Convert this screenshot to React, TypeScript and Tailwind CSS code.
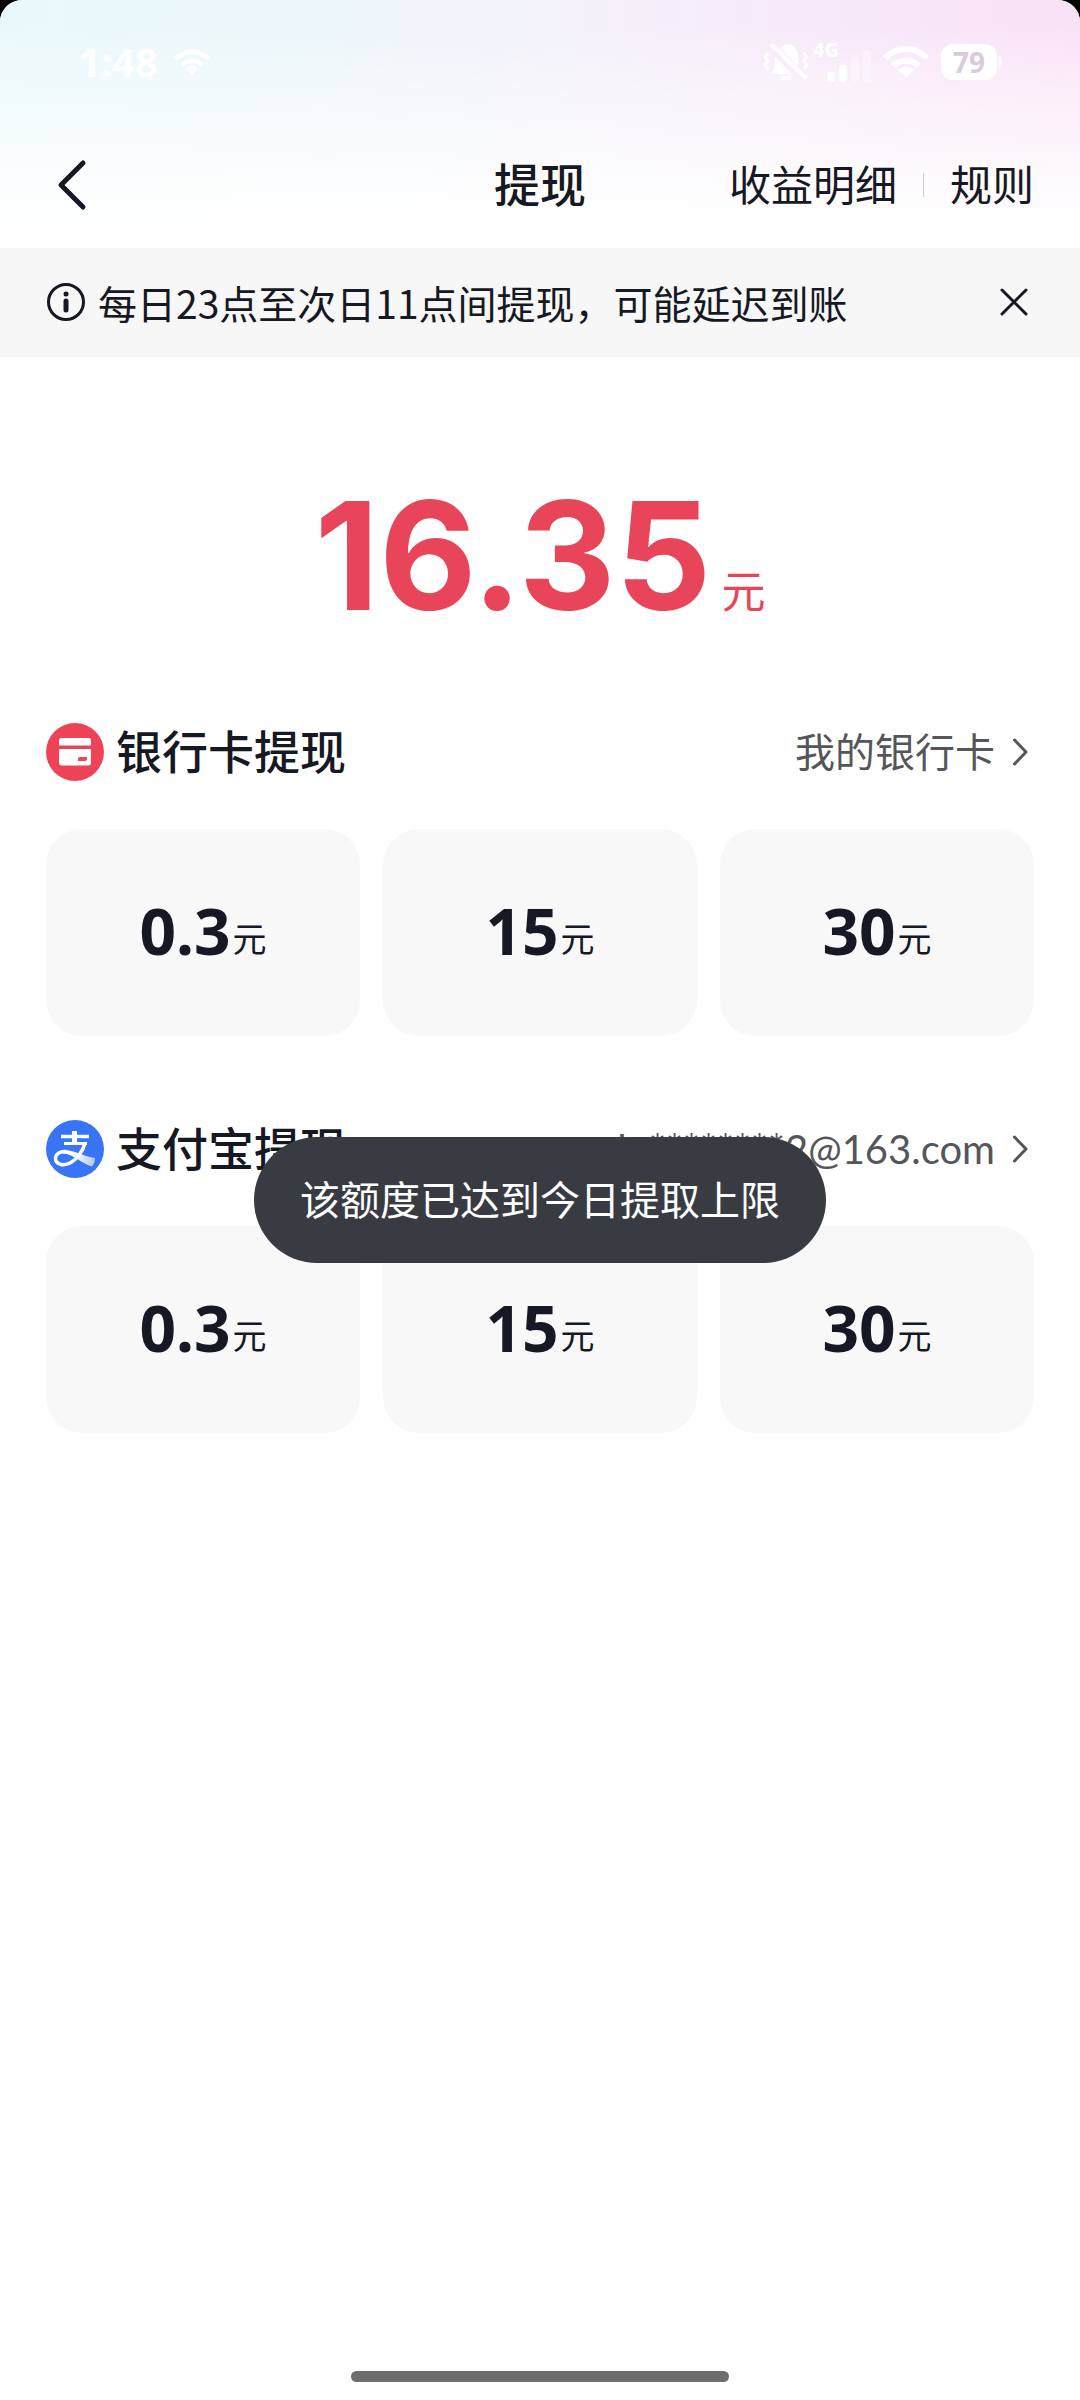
const amounts = ["0.3", "15", "30"]

function WifiIcon({ className }: { className: string }) {
  return (
    <svg viewBox="0 0 46 32" className={className} fill="none" stroke="currentColor" strokeWidth="6">
      <path d="M2 12 C14 0 32 0 44 12" />
      <path d="M10 20 C17 13 29 13 36 20" />
      <path d="M15 24 Q23 17 31 24 L23 32 Z" fill="currentColor" stroke="none" />
    </svg>
  )
}

function BellOffIcon() {
  return (
    <svg viewBox="0 0 46 40" className="h-10 w-[46px]" fill="none" stroke="currentColor" strokeWidth="3">
      <path d="M12 15 L29 32 H8 C11 28 12 24 12 15 Z" fill="currentColor" stroke="none" />
      <path d="M17 6 C25 -1 35 4 35 14 V24 Z" fill="currentColor" stroke="none" />
      <path d="M8 2 L43 36" strokeWidth="4" />
      <path d="M18 36 H28" strokeWidth="4" />
      <path d="M5 11 L2 15 L5 19 L2 23 L5 27" />
      <path d="M41 11 L44 15 L41 19 L44 23 L41 27" />
    </svg>
  )
}

function SignalIcon() {
  return (
    <svg viewBox="0 0 44 32" className="h-8 w-11" fill="currentColor">
      <rect x="0" y="22" width="8" height="10" rx="2" />
      <rect x="12" y="15" width="8" height="17" rx="2" />
      <rect x="24" y="7" width="8" height="25" rx="2" opacity="0.3" />
      <rect x="36" y="0" width="8" height="32" rx="2" opacity="0.3" />
    </svg>
  )
}

function BankCardIcon() {
  return (
    <svg viewBox="0 0 58 58" className="size-[58px]">
      <circle cx="29" cy="29" r="29" fill="#ee4257" />
      <path d="M13 22.5 V17.5 Q13 15 15.5 15 H42.5 Q45 15 45 17.5 V22.5 Z" fill="#fff" />
      <path d="M13 26 H45 V39.5 Q45 42.5 42 42.5 H16 Q13 42.5 13 39.5 Z" fill="#fff" />
      <path d="M34 34 H41 V36 Q41 38 39 38 H32 V36 Q32 34 34 34 Z" fill="#ee4257" />
    </svg>
  )
}

function AlipayIcon() {
  return (
    <svg viewBox="0 0 58 58" className="size-[58px]" fill="none" stroke="#fff">
      <defs>
        <linearGradient id="swoosh" x1="0" x2="1" y1="0" y2="0">
          <stop offset="0.4" stopColor="#fff" />
          <stop offset="1" stopColor="#fff" stopOpacity="0.6" />
        </linearGradient>
      </defs>
      <circle cx="29" cy="29" r="29" fill="#3875f6" stroke="none" />
      <path d="M15 16.5 H43" strokeWidth="3.5" />
      <path d="M28.5 11 V24" strokeWidth="5" />
      <path d="M18 23.5 H41" strokeWidth="3" />
      <path d="M39 23 C37 31 31 39 25 42.5 C17 47 9.5 44 9.5 38.5 C9.5 34 14 31 20 31.5" strokeWidth="3.5" />
      <path
        d="M15 30.5 C24 28 33 35 49 38 C49 41 48 44 46 46.5 C38 44 32 39 25 35.5 C21 34 17 33 13 34 Z"
        fill="url(#swoosh)"
        stroke="none"
      />
    </svg>
  )
}

function Withdrawal({ icon, title, account }: { icon: React.ReactNode; title: string; account: string }) {
  return (
    <section>
      <div className="flex items-center justify-between">
        <h2 className="flex items-center gap-3 text-[46px] leading-[58px] font-medium">
          {icon}
          {title}
        </h2>
        <a href="#account" className="flex items-center gap-[18px] pr-[6px] text-[40px] leading-[58px] text-[#55565a]">
          {account}
          <svg viewBox="0 0 15 28" className="h-7 w-[15px]" fill="none" stroke="currentColor" strokeWidth="3">
            <path d="M1.5 2 L13 14 L1.5 26" strokeLinecap="round" strokeLinejoin="round" />
          </svg>
        </a>
      </div>
      <div className="mt-12 grid grid-cols-3 gap-[23px]">
        {amounts.map((amount) => (
          <button
            key={amount}
            type="button"
            className="flex h-[207px] items-center justify-center rounded-[36px] bg-[#f8f8f8] pb-1"
          >
            <span className="flex items-end gap-[2px]">
              <span className="font-['Noto_Sans'] text-[64px] leading-none font-bold">{amount}</span>
              <span className="pb-[7px] text-[34px] leading-none">元</span>
            </span>
          </button>
        ))}
      </div>
    </section>
  )
}

export default function App() {
  return (
    <div className="bg-black font-['Lato','Noto_Sans_CJK_SC',sans-serif] text-[#161823]">
      <div className="flex min-h-screen flex-col overflow-hidden rounded-t-[22px] bg-white">
        <header className="bg-[linear-gradient(to_bottom,transparent_10%,#ffffff80_45%,white_90%),linear-gradient(to_right,#e9f9fb,#ecf6fa_30%,#f4f0fa_55%,#fae2f6)]">
          <div className="flex h-[124px] items-center justify-between px-[78px] text-white">
            <div className="flex items-center gap-4">
              <span className="font-['Noto_Sans'] text-[40px] leading-none font-bold">1:48</span>
              <WifiIcon className="h-7 w-9" />
            </div>
            <div className="flex items-center gap-3">
              <div className="flex items-center gap-1">
                <BellOffIcon />
                <div className="flex h-10 items-end">
                  <span className="-mr-3 self-start font-['Noto_Sans'] text-xl leading-4 font-bold">4G</span>
                  <SignalIcon />
                </div>
              </div>
              <WifiIcon className="h-8 w-[46px]" />
              <div className="flex items-center gap-px">
                <span className="rounded-xl bg-white px-3 font-['Noto_Sans'] text-[28px] leading-9 font-bold text-[#d9cbd9]">
                  79
                </span>
                <span className="h-3 w-1 rounded-r bg-white/60" />
              </div>
            </div>
          </div>
          <nav className="grid h-[124px] grid-cols-[1fr_auto_1fr] items-center px-[46px] pb-[2px]">
            <button type="button" aria-label="返回" className="justify-self-start pl-[10px]">
              <svg viewBox="0 0 32 52" className="h-[52px] w-8" fill="none" stroke="currentColor" strokeWidth="5">
                <path d="M27 4 L5 26 L27 48" strokeLinecap="round" strokeLinejoin="round" />
              </svg>
            </button>
            <h1 className="text-[46px] leading-[58px] font-medium">提现</h1>
            <div className="flex items-center gap-[26px] justify-self-end text-[42px] leading-[58px]">
              <a href="#records">收益明细</a>
              <span className="h-6 w-px bg-[#d0d0d3]" />
              <a href="#rules">规则</a>
            </div>
          </nav>
        </header>

        <div className="flex h-[109px] items-center bg-[#f7f7f7] px-[46px] pb-[2px]">
          <svg viewBox="0 0 40 40" className="size-10" fill="none" stroke="currentColor" strokeWidth="3">
            <circle cx="20" cy="20" r="17.5" />
            <circle cx="20" cy="12" r="2.5" fill="currentColor" stroke="none" />
            <path d="M20 19 V28" strokeWidth="5" strokeLinecap="round" />
          </svg>
          <p className="ml-3 flex-1 font-['Noto_Sans_CJK_SC'] text-[39px] leading-[58px]">
            每日23点至次日11点间提现，可能延迟到账
          </p>
          <button type="button" aria-label="关闭" className="pr-[6px]">
            <svg viewBox="0 0 28 28" className="size-7" fill="none" stroke="currentColor" strokeWidth="3">
              <path d="M2 2 L26 26 M26 2 L2 26" strokeLinecap="round" />
            </svg>
          </button>
        </div>

        <main className="flex-1 px-[46px]">
          <p className="flex items-end justify-center gap-[10px] pt-[124px] pb-[92px] text-[#e8455b]">
            <span className="font-['Inter'] text-[150px] leading-none font-bold">16.35</span>
            <span className="pb-[18px] text-[44px] leading-none">元</span>
          </p>
          <div className="flex flex-col gap-[84px]">
            <Withdrawal icon={<BankCardIcon />} title="银行卡提现" account="我的银行卡" />
            <Withdrawal icon={<AlipayIcon />} title="支付宝提现" account="lu********2@163.com" />
          </div>
        </main>

        <div className="mx-auto mb-[18px] h-[11px] w-[35%] rounded-full bg-[#6e6e6e]" />
      </div>

      <div
        role="status"
        className="fixed top-1/2 left-1/2 -translate-x-1/2 -translate-y-1/2 rounded-full bg-[#393b43] px-[46px] py-[34px] text-[40px] leading-[58px] whitespace-nowrap text-white"
      >
        该额度已达到今日提取上限
      </div>
    </div>
  )
}
